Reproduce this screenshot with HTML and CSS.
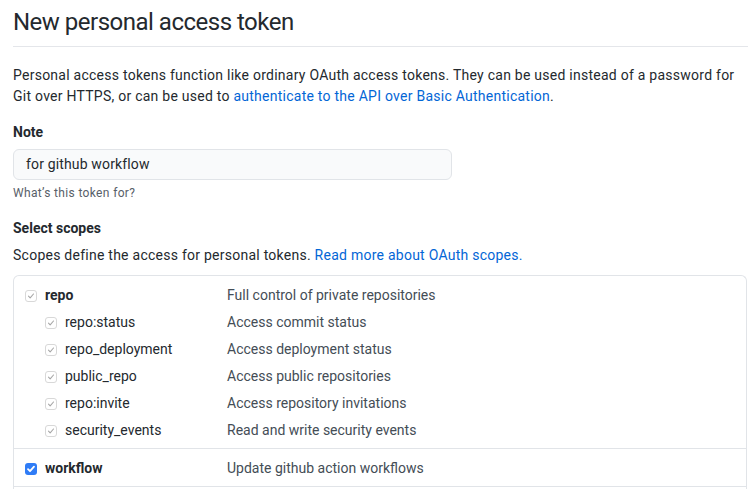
FILE: index.html
```html
<!DOCTYPE html>
<html lang="en">
<head>
<meta charset="utf-8">
<title>New personal access token</title>
<link rel="stylesheet" href="styles.css">
</head>
<body>
<main class="page">
  <h1 class="title">New personal access token</h1>
  <p class="intro">Personal access tokens function like ordinary OAuth access tokens. They can be used instead of a password for Git over HTTPS, or can be used to <a href="#" class="link">authenticate to the API over Basic Authentication</a>.</p>

  <div class="field">
    <label class="field-label">Note</label>
    <div class="input">for github workflow</div>
    <p class="note">What’s this token for?</p>
  </div>

  <h2 class="field-label scopes-title">Select scopes</h2>
  <p class="scopes-desc">Scopes define the access for personal tokens. <a href="#" class="link">Read more about OAuth scopes.</a></p>

  <div class="scopes">
    <div class="group">
      <div class="row">
        <span class="name top"><span class="cb disabled"><svg viewBox="0 0 12 12"><path d="M3 6.2l2 2 4-4.6"/></svg></span><b>repo</b></span>
        <span class="desc">Full control of private repositories</span>
      </div>
      <div class="row">
        <span class="name child"><span class="cb disabled"><svg viewBox="0 0 12 12"><path d="M3 6.2l2 2 4-4.6"/></svg></span>repo:status</span>
        <span class="desc">Access commit status</span>
      </div>
      <div class="row">
        <span class="name child"><span class="cb disabled"><svg viewBox="0 0 12 12"><path d="M3 6.2l2 2 4-4.6"/></svg></span>repo_deployment</span>
        <span class="desc">Access deployment status</span>
      </div>
      <div class="row">
        <span class="name child"><span class="cb disabled"><svg viewBox="0 0 12 12"><path d="M3 6.2l2 2 4-4.6"/></svg></span>public_repo</span>
        <span class="desc">Access public repositories</span>
      </div>
      <div class="row">
        <span class="name child"><span class="cb disabled"><svg viewBox="0 0 12 12"><path d="M3 6.2l2 2 4-4.6"/></svg></span>repo:invite</span>
        <span class="desc">Access repository invitations</span>
      </div>
      <div class="row">
        <span class="name child"><span class="cb disabled"><svg viewBox="0 0 12 12"><path d="M3 6.2l2 2 4-4.6"/></svg></span>security_events</span>
        <span class="desc">Read and write security events</span>
      </div>
    </div>
    <div class="group">
      <div class="row">
        <span class="name top"><span class="cb checked"><svg viewBox="0 0 12 12"><path d="M3 6.2l2 2 4-4.6"/></svg></span><b>workflow</b></span>
        <span class="desc">Update github action workflows</span>
      </div>
    </div>
    <div class="group last"></div>
  </div>
</main>
</body>
</html>
```

FILE: styles.css
```css
* { box-sizing: border-box; }

html, body {
  margin: 0;
  background: #ffffff;
}

body {
  font-family: Roboto, "Liberation Sans", sans-serif;
  font-size: 14px;
  line-height: 1.5;
  color: #24292e;
}

.page {
  padding: 7px 6px 0 13px;
  overflow: hidden;
  height: 489px;
}

.title {
  margin: 0;
  font-size: 24px;
  font-weight: 400;
  letter-spacing: -0.5px;
  line-height: 30px;
  padding-bottom: 9px;
  border-bottom: 1px solid #e4e6ea;
}

.intro {
  margin: 18px 0 0;
  max-width: 730px;
  line-height: 21px;
  letter-spacing: 0.25px;
}

.link {
  color: #0366d6;
  text-decoration: none;
}

.field {
  margin-top: 15px;
}

.field-label {
  display: block;
  margin: 0;
  font-size: 14px;
  font-weight: 700;
  line-height: 21px;
}

.input {
  margin-top: 6px;
  width: 439px;
  height: 31px;
  padding: 0 12px;
  line-height: 29px;
  background: #f9fafb;
  border: 1px solid #e1e4e8;
  border-radius: 6px;
  color: #24292e;
  letter-spacing: 0.15px;
}

.note {
  margin: 4px 0 0;
  font-size: 12px;
  line-height: 18px;
  letter-spacing: 0.35px;
  color: #586069;
}

.scopes-title {
  margin-top: 16px;
}

.scopes-desc {
  margin: 6px 0 0;
  line-height: 21px;
  letter-spacing: 0.25px;
}

.scopes {
  margin-top: 9px;
  margin-right: 1px;
  border: 1px solid #e1e4e8;
  border-bottom: 0;
  border-radius: 6px 6px 0 0;
}

.group {
  padding: 6px 0 4px;
  border-bottom: 1px solid #e1e4e8;
}

.group + .group {
  padding-top: 6px;
}

.group.last {
  padding: 0;
  height: 20px;
  border-bottom: 0;
}

.row {
  display: grid;
  grid-template-columns: 213px 1fr;
  height: 27px;
  line-height: 27px;
  align-items: center;
}

.name {
  display: flex;
  align-items: center;
  gap: 8px;
}

.name.top { padding-left: 11px; }
.name.child { padding-left: 31px; }

.name b { font-weight: 700; }

.desc {
  color: #444d56;
}

.cb {
  display: inline-flex;
  align-items: center;
  justify-content: center;
  width: 12px;
  height: 12px;
  border-radius: 3px;
  flex: none;
}

.cb svg {
  width: 12px;
  height: 12px;
  fill: none;
  stroke-width: 1.3;
  stroke-linecap: round;
  stroke-linejoin: round;
}

.cb.disabled {
  background: #ffffff;
  border: 1px solid #d8d8d8;
}

.cb.disabled svg {
  stroke: #a6a6a6;
  width: 10px;
  height: 10px;
}

.cb.checked {
  background: #2f7cf6;
}

.cb.checked svg {
  stroke: #ffffff;
  stroke-width: 1.8;
}
```
